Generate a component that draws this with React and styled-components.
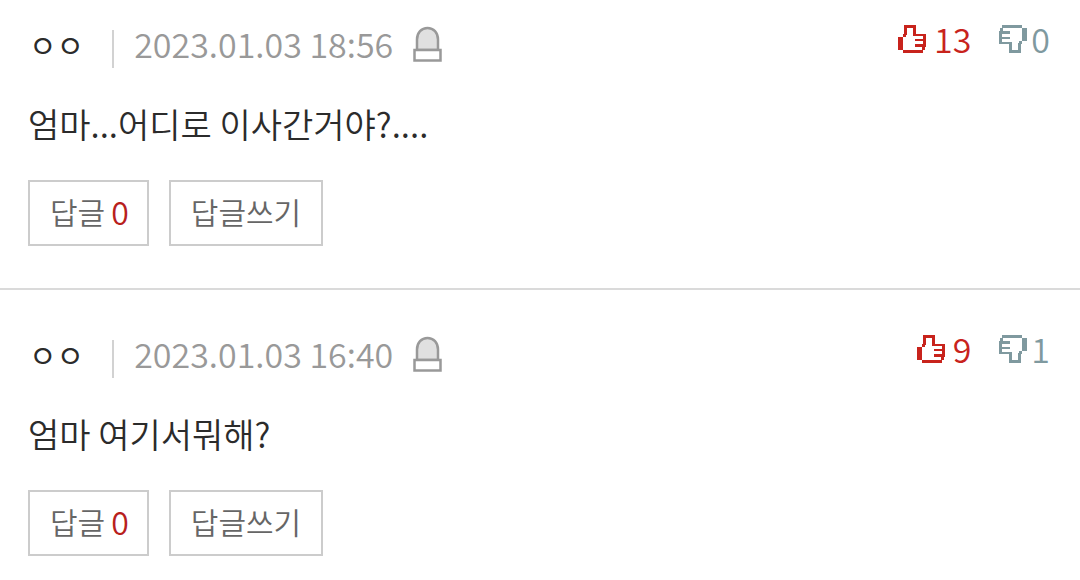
import React from "react";
import styled, { createGlobalStyle } from "styled-components";

const GlobalStyle = createGlobalStyle`
  * { box-sizing: border-box; }
  body {
    margin: 0;
    background: #fff;
    font-family: "Noto Sans CJK KR", "Noto Sans", sans-serif;
    font-weight: 350;
    color: #2b2b2b;
  }
`;

const CommentList = styled.ul`
  margin: 0;
  padding: 0;
  list-style: none;
`;

const CommentItem = styled.li`
  padding: 40px 30px 42px 28px;
  border-bottom: 2px solid #dadada;
  &:first-child { padding-top: 20px; }
  &:last-child { border-bottom: 0; padding-bottom: 24px; }
`;

const Header = styled.header`
  display: flex;
  justify-content: space-between;
  align-items: flex-start;
`;

const Meta = styled.div`
  display: flex;
  align-items: center;
  height: 48px;
`;

const Author = styled.span`
  padding: 0 28px 0 1px;
  font-size: 30px;
  font-weight: 400;
  line-height: 48px;
`;

const Divider = styled.span`
  align-self: flex-end;
  width: 2px;
  height: 38px;
  margin-right: 20px;
  background: #d2d2d2;
`;

const Posted = styled.time`
  font-size: 34px;
  line-height: 38px;
  color: #999;
`;

const ReportButton = styled.button`
  display: flex;
  margin-left: 20px;
  padding: 0;
  border: 0;
  background: none;
`;

const Votes = styled.div`
  display: flex;
  gap: 28px;
`;

const VoteButton = styled.button`
  display: flex;
  align-items: center;
  gap: ${(p) => (p.$down ? 4 : 8)}px;
  padding: 0;
  border: 0;
  background: none;
  font: inherit;
  font-size: 34px;
  line-height: 38px;
  color: ${(p) => (p.$down ? "#7f999f" : "#c8231c")};
`;

const Message = styled.p`
  margin: 32px 0;
  font-size: 34px;
  line-height: 48px;
`;

const Actions = styled.div`
  display: flex;
  gap: 20px;
`;

const ActionButton = styled.button`
  display: flex;
  align-items: center;
  gap: 6px;
  height: 66px;
  padding: 0 ${(p) => (p.$counted ? 18 : 20)}px 4px 20px;
  border: 2px solid #ccc;
  background: #fff;
  font: inherit;
  font-size: 30px;
  line-height: 48px;
  color: #666;
`;

const Count = styled.span`
  font-size: 32px;
  color: #b8201c;
`;

function ThumbIcon({ down }) {
  return (
    <svg width="28" height="28" viewBox="0 0 28 28" fill="currentColor" shapeRendering="crispEdges" aria-hidden="true">
      <g transform={down ? "rotate(180 14 14)" : undefined}>
        <path d="M0 12h5v13H0z" />
        <path d="M5 9h3v3H5zM6 0h12v3H6zM6 3h3v7H6zM15 3h3v6h-3z" />
        <path d="M15 9h13v2H15zM25 9h3v13h-3zM17 14h8v2h-8zM17 19h8v3h-8zM24 22h3v3h-3z" />
        <path d="M5 25h20v3H5z" />
      </g>
    </svg>
  );
}

function SirenIcon() {
  return (
    <svg width="29" height="36" viewBox="0 0 29 36" stroke="#999" strokeWidth="2.5" aria-hidden="true">
      <path d="M4 24V13.500C4 6.500 8.500 2 14.500 2S25 6.500 25 13.500V24z" fill="#e0e0e0" />
      <path d="M1.500 24h26v10.500h-26z" fill="#fff" />
    </svg>
  );
}

const comments = [
  { time: "2023.01.03 18:56", text: "엄마...어디로 이사간거야?....", up: 13, down: 0 },
  { time: "2023.01.03 16:40", text: "엄마 여기서뭐해?", up: 9, down: 1 },
];

function Comment({ time, text, up, down }) {
  return (
    <CommentItem>
      <Header>
        <Meta>
          <Author>ㅇㅇ</Author>
          <Divider />
          <Posted>{time}</Posted>
          <ReportButton type="button" aria-label="신고">
            <SirenIcon />
          </ReportButton>
        </Meta>
        <Votes>
          <VoteButton type="button">
            <ThumbIcon />
            {up}
          </VoteButton>
          <VoteButton type="button" $down>
            <ThumbIcon down />
            {down}
          </VoteButton>
        </Votes>
      </Header>
      <Message>{text}</Message>
      <Actions>
        <ActionButton type="button" $counted>
          답글<Count>0</Count>
        </ActionButton>
        <ActionButton type="button">답글쓰기</ActionButton>
      </Actions>
    </CommentItem>
  );
}

export default function App() {
  return (
    <>
      <GlobalStyle />
      <CommentList>
        {comments.map((c) => (
          <Comment key={c.time} {...c} />
        ))}
      </CommentList>
    </>
  );
}
